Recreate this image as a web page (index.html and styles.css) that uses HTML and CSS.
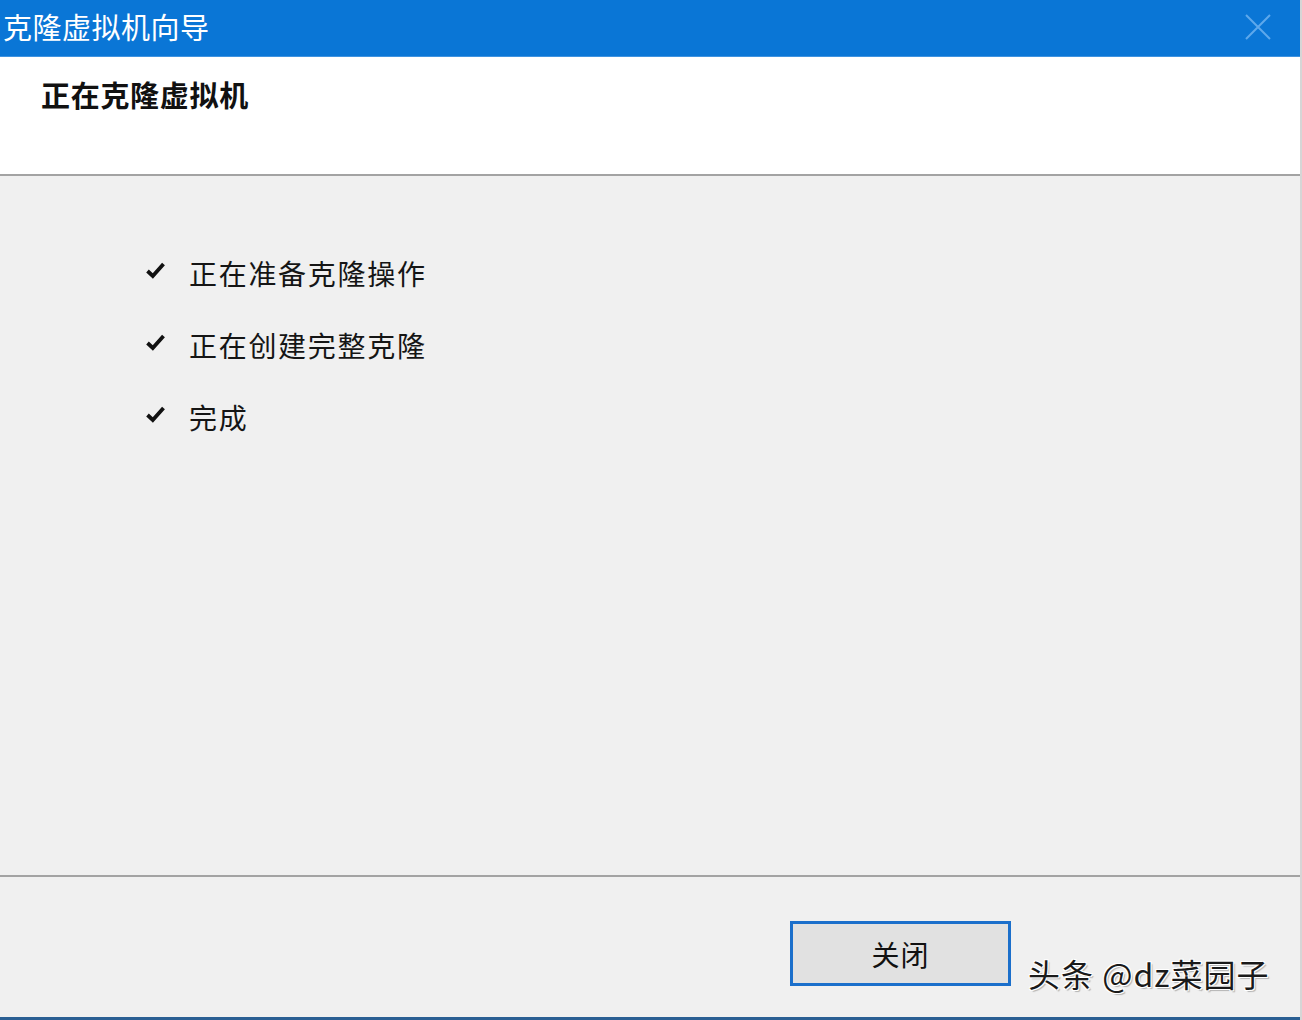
FILE: index.html
```html
<!DOCTYPE html>
<html lang="zh-CN">
<head>
<meta charset="utf-8">
<title>克隆虚拟机向导</title>
<link rel="stylesheet" href="styles.css">
</head>
<body>
<div class="window">
  <div class="titlebar">
    <span class="title">克隆虚拟机向导</span>
    <svg class="close" width="26" height="26" viewBox="0 0 26 26"><path d="M1 1 L25 25 M25 1 L1 25" stroke="#5ea8ec" stroke-width="2" fill="none"/></svg>
  </div>
  <div class="header">
    <h1 class="heading">正在克隆虚拟机</h1>
  </div>
  <div class="content">
    <ul class="steps">
      <li class="step"><svg class="check" width="19" height="17" viewBox="0 0 19 17"><path d="M1.5 9 L6.8 14 L17.5 2" stroke="#111" stroke-width="3.8" fill="none"/></svg><span>正在准备克隆操作</span></li>
      <li class="step"><svg class="check" width="19" height="17" viewBox="0 0 19 17"><path d="M1.5 9 L6.8 14 L17.5 2" stroke="#111" stroke-width="3.8" fill="none"/></svg><span>正在创建完整克隆</span></li>
      <li class="step"><svg class="check" width="19" height="17" viewBox="0 0 19 17"><path d="M1.5 9 L6.8 14 L17.5 2" stroke="#111" stroke-width="3.8" fill="none"/></svg><span>完成</span></li>
    </ul>
  </div>
  <div class="footer">
    <button class="btn">关闭</button>
    <span class="watermark">头条 @dz菜园子</span>
  </div>
</div>
</body>
</html>
```
FILE: styles.css
```css
html, body {
  margin: 0;
  padding: 0;
  width: 1302px;
  height: 1020px;
  overflow: hidden;
  background: #f0f0f0;
}
.window {
  width: 1302px;
  height: 1020px;
  display: flex;
  flex-direction: column;
  font-family: "Noto Sans CJK SC", "Noto Sans", sans-serif;
  box-sizing: border-box;
  border-right: 2px solid #d6d6d6;
}
.titlebar {
  height: 57px;
  background: #0a76d6;
  display: flex;
  align-items: center;
  justify-content: space-between;
  padding: 0 29px 0 3px;
  box-sizing: border-box;
  border-bottom: 1px solid #3f93e0;
}
.title {
  color: #fff;
  font-size: 29px;
  line-height: 30px;
  letter-spacing: 0.5px;
  margin-top: -4px;
}
.close {
  margin-top: -3px;
}
.header {
  height: 119px;
  flex: none;
  background: #fff;
  border-bottom: 2px solid #a3a3a3;
  box-sizing: border-box;
  padding: 21px 0 0 41px;
}
.heading {
  margin: 0;
  font-size: 29px;
  line-height: 32px;
  font-weight: 700;
  color: #111;
  letter-spacing: 0.7px;
}
.content {
  flex: 1;
  background: #f0f0f0;
  border-bottom: 2px solid #a3a3a3;
}
.steps {
  list-style: none;
  margin: 0;
  padding: 61px 0 0 146px;
}
.step {
  display: flex;
  align-items: center;
  height: 72px;
  font-size: 28px;
  color: #151515;
  letter-spacing: 1.7px;
}
.check {
  margin-right: 24px;
  margin-top: -6px;
}
.footer {
  position: relative;
  height: 143px;
  flex: none;
  box-sizing: border-box;
  padding: 44px 0 0 790px;
  background: #f0f0f0;
  border-bottom: 3px solid #2b5f93;
}
.btn {
  width: 221px;
  height: 65px;
  border: 3px solid #1b6fcb;
  background: #e1e1e1;
  font-family: "Noto Sans CJK SC", sans-serif;
  font-size: 28px;
  color: #111;
  padding: 0;
  letter-spacing: 1px;
}
.watermark {
  position: absolute;
  left: 1028px;
  top: 76px;
  font-size: 32px;
  line-height: 40px;
  color: #1a1a1a;
  letter-spacing: 1px;
  white-space: nowrap;
  text-shadow: 1px 1px 0 #fff, -1px -1px 0 #fff, 1px -1px 0 #fff, -1px 1px 0 #fff, 2px 2px 1px rgba(0,0,0,0.25);
}
```
